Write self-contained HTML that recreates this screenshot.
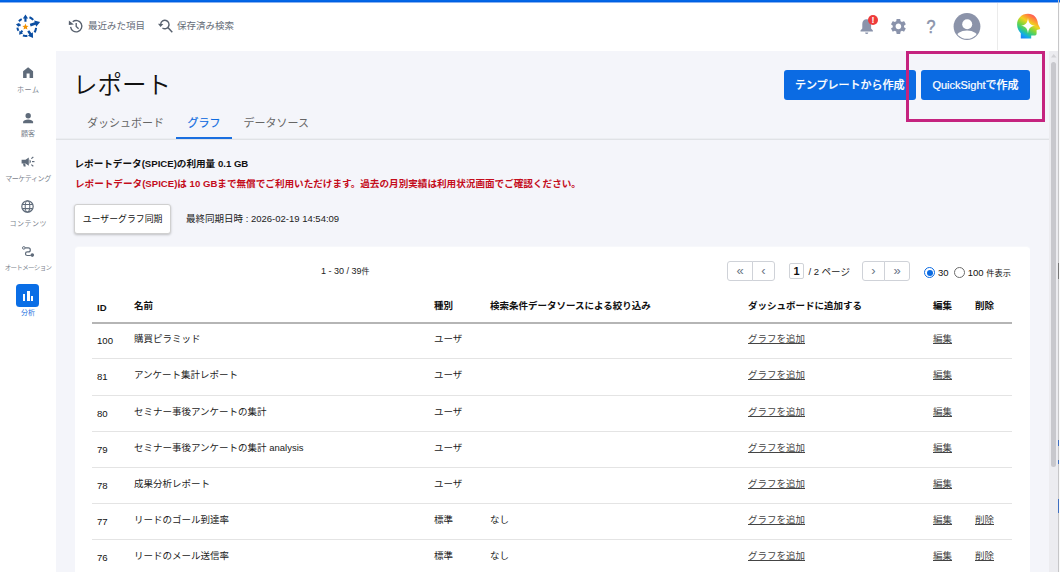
<!DOCTYPE html>
<html lang="ja">
<head>
<meta charset="utf-8">
<title>レポート</title>
<style>
*{box-sizing:border-box;margin:0;padding:0}
html,body{width:1060px;height:572px;overflow:hidden;background:#f4f5fa}
body{font-family:"Liberation Sans","Noto Sans CJK JP",sans-serif;color:#111;position:relative;font-size:10px}
.abs{position:absolute}
#header{position:absolute;left:0;top:0;width:1060px;height:51px;background:#fff}
#topbar{position:absolute;left:0;top:0;width:1060px;height:3px;background:#0060e3;border-top:1px solid #0366e6;border-bottom:1px solid #8ab2f0}
#side{position:absolute;left:0;top:51px;width:56px;height:521px;background:#fff}
.hitem{position:absolute;top:18px;font-size:9.5px;color:#666d78;white-space:nowrap;line-height:16px}
.nav{position:absolute;left:0;width:56px;text-align:center;font-size:7px;color:#7c838e;white-space:nowrap;line-height:10px}
.ico{position:absolute;overflow:visible}
#title{position:absolute;left:73px;top:66.5px;font-size:24.5px;line-height:38px;color:#111;font-weight:350;white-space:nowrap}
.tab{position:absolute;top:113.5px;font-size:11px;line-height:18px;color:#666;white-space:nowrap}
.tab.on{color:#0f6be0;-webkit-text-stroke:0.2px #0f6be0}
#tabline{position:absolute;left:56px;top:138px;width:993px;height:2px;background:#e6e8ec;border-bottom:1px solid #e0e2e6;border-top:1px solid #eceef2}
#tabul{position:absolute;left:175.5px;top:136.5px;width:56.5px;height:2px;background:#1a6fe0}
.btn{position:absolute;top:70px;height:30px;background:#0b6be3;color:#fff;font-size:11px;line-height:30.5px;text-align:center;border-radius:3px;white-space:nowrap;font-weight:500;-webkit-text-stroke:0.2px #fff}
#hl{position:absolute;left:906px;top:51px;width:139px;height:70.5px;border:3px solid #c5237f}
#l1{position:absolute;left:74.5px;top:157px;font-size:9.6px;line-height:14px;font-weight:700;color:#111;white-space:nowrap}
#l2{position:absolute;left:75px;top:177px;font-size:9.6px;line-height:14px;font-weight:700;color:#c40d1c;white-space:nowrap}
#sync{position:absolute;left:74.3px;top:204px;width:96.5px;height:30px;background:#fff;border:1px solid #d0d0d0;border-radius:3px;font-size:8.9px;line-height:29px;text-align:center;white-space:nowrap;box-shadow:0 1px 2.5px rgba(0,0,0,.22)}
#synct{position:absolute;left:186px;top:212px;font-size:9.5px;line-height:14px;white-space:nowrap;color:#222}
#card{position:absolute;left:75px;top:246px;width:955px;height:340px;background:#fff;border-radius:4px;border-top:1px solid #f7f8fb}
#cnt{position:absolute;left:321px;top:264px;font-size:9px;line-height:14px;color:#222;white-space:nowrap}
.pg{position:absolute;top:261px;height:20px;border:1px solid #cfd2d8;background:#fff;font-size:13px;line-height:17px;text-align:center;color:#6b7686}
table{position:absolute;left:92px;top:289px;width:920px;border-collapse:collapse;table-layout:fixed;font-size:9.5px}
th{text-align:left;font-weight:700;height:34px;border-bottom:2px solid #b5b5b5;padding:0 0 1px 4px;white-space:nowrap;color:#111}
td{height:36px;border-bottom:1px solid #e4e4e4;padding:0 0 5px 4px;white-space:nowrap;color:#222}
td u{color:#444}
th:first-child{padding:3px 0 0 5px}
td:first-child{font-size:9.6px;padding:0 0 0 5px;color:#111}
tr.h37 td{height:37px}
tr.h35 td{height:35px}
#sbtrack{position:absolute;left:1049px;top:51px;width:9px;height:521px;background:#ececf0}
#edge{position:absolute;left:1058px;top:0;width:1px;height:572px;background:#c6c6c8}
#edge2{position:absolute;left:1059px;top:3px;width:1px;height:569px;background:#fafafa}
.mk{position:absolute;left:1058px;width:1px;background:#3f6fc0}
#sbthumb{position:absolute;left:1050.5px;top:62px;width:5.5px;height:404.5px;background:#c8c8cd;border-radius:3px}
</style>
</head>
<body>
<div id="header">
  <svg class="ico" style="left:10px;top:11px" width="30" height="30" viewBox="-0.45 -0.7 30 30"><g fill="#0b4ea2"><polygon points="16.05,10.00 16.05,6.90 17.60,6.90 15.00,2.70 12.40,6.90 13.95,6.90 13.95,10.00"/><polygon points="20.17,14.74 25.12,13.13 25.72,14.99 29.65,10.24 23.68,8.71 24.28,10.56 19.34,12.17"/><polygon points="16.76,19.84 18.88,22.99 17.43,23.97 22.61,26.27 22.41,20.62 20.96,21.60 18.83,18.45"/><polygon points="11.13,18.32 10.03,19.74 9.00,18.94 8.72,23.04 12.63,21.77 11.60,20.97 12.71,19.56"/><polygon points="10.43,12.74 8.88,12.33 9.19,11.17 5.53,12.46 8.06,15.42 8.37,14.26 9.91,14.67"/><path d="M19.02 5.52 A10.30 10.30 0 0 1 22.77 8.24" fill="none" stroke="#0b4ea2" stroke-width="2"/><path d="M25.64 16.12 A10.70 10.70 0 0 1 24.07 20.67" fill="none" stroke="#0b4ea2" stroke-width="2"/><path d="M16.91 24.00 A9.20 9.20 0 0 1 12.46 23.84" fill="none" stroke="#0b4ea2" stroke-width="2"/><path d="M7.99 19.05 A8.10 8.10 0 0 1 6.94 15.85" fill="none" stroke="#0b4ea2" stroke-width="2"/><path d="M8.49 9.54 A8.50 8.50 0 0 1 11.27 7.36" fill="none" stroke="#0b4ea2" stroke-width="2"/></g><polygon fill="#f39200" points="15.00,11.90 15.88,13.99 18.14,14.18 16.43,15.66 16.94,17.87 15.00,16.70 13.06,17.87 13.57,15.66 11.86,14.18 14.12,13.99"/></svg>
  <svg class="ico" style="left:0;top:0" width="1060" height="51" viewBox="0 0 1060 51" fill="none" stroke="#58616e" stroke-width="1.35">
    <path d="M70.59 26.89 A5.65 5.65 0 1 0 72.72 21.75"/>
    <path d="M68.9 20.4 L68.8 24.9 L73.9 24.4 Z" fill="#58616e" stroke="none"/>
    <path d="M76.2 22.9 V26.4 L78.6 28.7"/>
    <path d="M162.45 27.98 A4.2 4.2 0 1 0 160.66 23.77"/>
    <path d="M167.9 27.6 L172.3 32.2" stroke-width="1.5"/>
    <path d="M158.0 23.7 L163.4 24.0 L160.5 27.0 Z" fill="#58616e" stroke="none"/>
  </svg>
  <div class="hitem" style="left:88px">最近みた項目</div>
  <div class="hitem" style="left:177px">保存済み検索</div>

  <!-- bell -->
  <svg class="ico" style="left:859px;top:18px" width="14" height="15.5" viewBox="-1.4 -1.2 28 31">
    <path d="M14 1.5 C8.6 1.5 5.2 5.6 5.2 11 V20 L1.6 23.6 V25.6 H26.4 V23.6 L22.8 20 V11 C22.8 5.6 19.4 1.5 14 1.5 Z" fill="#8a93ab"/>
    <path d="M10.8 27.6 H17.2 A3.2 3.2 0 0 1 10.8 27.6 Z" fill="#8a93ab"/>
  </svg>
  <div class="abs" style="left:868px;top:15px;width:10px;height:10px;border-radius:50%;background:#ee3b3b"></div>
  <div class="abs" style="left:868px;top:15px;width:10px;height:10px;color:#fff;font-size:9px;line-height:10px;text-align:center;font-weight:700">!</div>
  <!-- gear -->
  <svg class="ico" style="left:889.2px;top:17.1px" width="18.8" height="18.8" viewBox="0 0 24 24">
    <path fill="#8a93ab" d="M19.14 12.94c.04-.3.06-.61.06-.94 0-.32-.02-.64-.07-.94l2.03-1.58a.49.49 0 0 0 .12-.61l-1.92-3.32a.488.488 0 0 0-.59-.22l-2.39.96c-.5-.38-1.030-.7-1.620-.94l-.36-2.540a.484.484 0 0 0-.48-.41h-3.840c-.24 0-.43.17-.47.41l-.36 2.540c-.59.24-1.130.57-1.620.94l-2.390-.96c-.22-.08-.47 0-.59.22L2.740 8.870c-.12.210-.08.470.12.610l2.030 1.580c-.05.300-.09.630-.09.940s.02.640.07.940l-2.030 1.580a.49.49 0 0 0-.12.610l1.920 3.320c.12.220.37.290.59.220l2.390-.96c.5.380 1.030.700 1.620.940l.36 2.540c.05.240.24.410.48.410h3.840c.24 0 .44-.17.470-.41l.36-2.540c.59-.24 1.130-.56 1.620-.94l2.390.96c.22.080.47 0 .59-.22l1.920-3.320c.12-.22.070-.47-.12-.61l-2.010-1.580zM12 15.600c-1.980 0-3.600-1.620-3.600-3.600s1.620-3.600 3.600-3.600 3.600 1.620 3.600 3.600-1.620 3.600-3.600 3.600z"/>
  </svg>
  <div class="abs" style="left:921px;top:14.5px;width:20px;height:24px;color:#8a93ab;font-size:17.5px;line-height:24px;text-align:center;-webkit-text-stroke:0.5px #8a93ab;transform:scaleX(.92)">?</div>
  <!-- avatar -->
  <svg class="ico" style="left:953px;top:13px" width="27" height="27" viewBox="-0.5 0 27 27">
    <defs><clipPath id="avc"><circle cx="13.5" cy="13.5" r="12.3"/></clipPath></defs>
    <circle cx="13.5" cy="13.5" r="13.4" fill="#8b93a9"/>
    <circle cx="13.7" cy="11.2" r="5" fill="#fff"/>
    <ellipse cx="13.5" cy="25" rx="11.5" ry="7.6" fill="#fff" clip-path="url(#avc)"/>
  </svg>
  <div class="abs" style="left:997px;top:3px;width:1px;height:47px;background:#ebebeb"></div>
  <!-- AI head -->
  <svg class="ico" style="left:1016px;top:13px" width="25" height="26" viewBox="0 0 25 26">
    <defs>
      <linearGradient id="aig" x1="0.85" y1="0.05" x2="0.3" y2="1">
        <stop offset="0" stop-color="#ff3d6b"/><stop offset="0.2" stop-color="#ff8a3a"/><stop offset="0.38" stop-color="#f2d21f"/><stop offset="0.58" stop-color="#7fd63a"/><stop offset="0.75" stop-color="#2fc98a"/><stop offset="0.9" stop-color="#12a7f0"/><stop offset="1" stop-color="#1d86f5"/>
      </linearGradient>
    </defs>
    <path fill="url(#aig)" d="M12 0.8 C5.5 0.8 1.1 5.6 1.1 11.6 C1.1 15.4 2.8 18.4 4.8 20.2 V25.4 H15.2 V22.4 H19 C20.2 22.4 20.6 21.6 20.6 20.6 V17 L23.6 16.2 C24.2 16 24.2 15.4 24 15 L22 11 C21.6 4.6 17.6 0.8 12 0.8 Z"/>
    <path fill="#fff" d="M12 5 C12.6 10 14.2 12 19 12.8 C14.2 13.6 12.6 15.6 12 20.6 C11.4 15.6 9.8 13.6 5 12.8 C9.8 12 11.4 10 12 5 Z"/>
  </svg>
</div>
<div id="topbar"></div>
<div id="side">
  <svg class="ico" style="left:22.7px;top:16px" width="10.2" height="11" viewBox="0 0 20.4 22"><path fill="#5f6b7a" d="M10.2 0.4 L0.2 8.4 V21.8 H7.2 V13 H13.2 V21.8 H20.2 V8.4 Z"/></svg>
  <div class="nav" style="top:33.5px;letter-spacing:.5px;text-indent:.5px">ホーム</div>
  <svg class="ico" style="left:22.7px;top:61.5px" width="10.2" height="10.4" viewBox="0 0 20.4 20.8"><circle cx="10.4" cy="5.6" r="5.4" fill="#5f6b7a"/><path fill="#5f6b7a" d="M0.2 20.6 V17.6 C0.2 14.6 5.6 12.8 10.2 12.8 C14.8 12.8 20.2 14.6 20.2 17.6 V20.6 Z"/></svg>
  <div class="nav" style="top:78px">顧客</div>
  <svg class="ico" style="left:21px;top:105px" width="14" height="11" viewBox="0 0 28 22"><g fill="#5f6b7a"><path d="M1.2 7.4 H9 L15.6 3 V19.4 L9 15 H1.2 Z"/><path d="M4 15 H8.4 L9.4 21 H5.4 Z"/><path d="M17 7 A4.6 4.6 0 0 1 17 15.4 Z"/></g><g stroke="#5f6b7a" stroke-width="2.3"><path d="M20.6 5.2 L24.6 2"/><path d="M22 11.2 H27"/><path d="M20.6 17.2 L24.6 20.4"/></g></svg>
  <div class="nav" style="top:123px;letter-spacing:-.4px">マーケティング</div>
  <svg class="ico" style="left:21.3px;top:149px" width="13" height="13" viewBox="0 0 26 26" fill="none" stroke="#5f6b7a" stroke-width="2"><circle cx="13" cy="13" r="11.4" stroke-width="2.4"/><ellipse cx="13" cy="13" rx="4.6" ry="11.4" stroke-width="2.1"/><path d="M2.6 8.8 H23.4 M2.6 17.2 H23.4" stroke-width="2.1"/></svg>
  <div class="nav" style="top:168px;letter-spacing:.5px;text-indent:.5px">コンテンツ</div>
  <svg class="ico" style="left:21px;top:194px" width="13" height="11" viewBox="-1.2 -1.6 26 22" fill="none" stroke="#5f6b7a" stroke-width="2.4"><circle cx="4.4" cy="4.2" r="2.6" stroke-width="2"/><path d="M7 4.2 H13.4 A4 4 0 0 1 13.4 12.2 H11.4 A3.6 3.6 0 0 0 11.4 19.4 H18.4"/><circle cx="21.4" cy="18.6" r="3.6" fill="#5f6b7a" stroke="none"/></svg>
  <div class="nav" style="top:212px;font-size:6.5px;letter-spacing:-.65px">オートメーション</div>
  <div class="abs" style="left:16px;top:233px;width:23px;height:23px;border-radius:3.5px;background:#0a6ee6"></div>
  <div class="abs" style="left:23px;top:243px;width:2.4px;height:7.2px;background:#fff"></div>
  <div class="abs" style="left:26.6px;top:240px;width:3px;height:10.2px;background:#fff"></div>
  <div class="abs" style="left:30.6px;top:245px;width:2.6px;height:5.2px;background:#fff"></div>
  <div class="nav" style="top:257px;color:#1a6fe0">分析</div>
</div>
<div id="title">レポート</div>
<div class="tab" style="left:87px">ダッシュボード</div>
<div class="tab on" style="left:187.5px">グラフ</div>
<div class="tab" style="left:243.5px">データソース</div>
<div id="tabline"></div><div id="tabul"></div>
<div class="btn" style="left:784px;width:131.5px">テンプレートから作成</div>
<div class="btn" style="left:921px;width:109px">QuickSightで作成</div>
<div id="hl"></div>
<div id="l1">レポートデータ(SPICE)の利用量 0.1 GB</div>
<div id="l2">レポートデータ(SPICE)は 10 GBまで無償でご利用いただけます。過去の月別実績は利用状況画面でご確認ください。</div>
<div id="sync">ユーザーグラフ同期</div>
<div id="synct">最終同期日時 : 2026-02-19 14:54:09</div>
<div id="card"></div>
<div id="cnt">1 - 30 / 39<span style="font-size:8px">件</span></div>
<div class="pg" style="left:727px;width:26px;border-radius:3px 0 0 3px">«</div>
<div class="pg" style="left:752px;width:23px;border-radius:0 3px 3px 0">‹</div>
<div class="abs" style="left:789px;top:263px;width:15px;height:15.5px;border:1px solid #d0d3d8;border-radius:2px;background:#fff;font-size:11px;font-weight:700;line-height:14.5px;text-align:center;color:#111">1</div>
<div class="abs" style="left:808.4px;top:264.5px;font-size:9.5px;line-height:14px;white-space:nowrap;color:#222">/ 2 ページ</div>
<div class="pg" style="left:862px;width:23px;border-radius:3px 0 0 3px">›</div>
<div class="pg" style="left:884px;width:26px;border-radius:0 3px 3px 0">»</div>
<div class="abs" style="left:924px;top:267px;width:11px;height:11px;border-radius:50%;border:1.3px solid #0b6be3;background:#fff"></div>
<div class="abs" style="left:926.5px;top:269.5px;width:6px;height:6px;border-radius:50%;background:#0b6be3"></div>
<div class="abs" style="left:938px;top:265.5px;font-size:9.5px;line-height:14px;white-space:nowrap;color:#111">30</div>
<div class="abs" style="left:954.4px;top:267px;width:11px;height:11px;border-radius:50%;border:1px solid #6b6b6b;background:#fff"></div>
<div class="abs" style="left:967.8px;top:265.5px;font-size:9.5px;line-height:14px;white-space:nowrap;color:#111">100 <span style="font-size:8.2px">件表示</span></div>
<table>
<colgroup><col style="width:38px"><col style="width:300px"><col style="width:56px"><col style="width:258px"><col style="width:185px"><col style="width:42px"><col></colgroup>
<tr><th>ID</th><th>名前</th><th>種別</th><th>検索条件データソースによる絞り込み</th><th>ダッシュボードに追加する</th><th>編集</th><th>削除</th></tr>
<tr class="h35"><td>100</td><td>購買ピラミッド</td><td>ユーザ</td><td></td><td><u>グラフを追加</u></td><td><u>編集</u></td><td></td></tr>
<tr class="h37"><td>81</td><td>アンケート集計レポート</td><td>ユーザ</td><td></td><td><u>グラフを追加</u></td><td><u>編集</u></td><td></td></tr>
<tr><td>80</td><td>セミナー事後アンケートの集計</td><td>ユーザ</td><td></td><td><u>グラフを追加</u></td><td><u>編集</u></td><td></td></tr>
<tr><td>79</td><td>セミナー事後アンケートの集計 analysis</td><td>ユーザ</td><td></td><td><u>グラフを追加</u></td><td><u>編集</u></td><td></td></tr>
<tr><td>78</td><td>成果分析レポート</td><td>ユーザ</td><td></td><td><u>グラフを追加</u></td><td><u>編集</u></td><td></td></tr>
<tr><td>77</td><td>リードのゴール到達率</td><td>標準</td><td>なし</td><td><u>グラフを追加</u></td><td><u>編集</u></td><td><u>削除</u></td></tr>
<tr><td>76</td><td>リードのメール送信率</td><td>標準</td><td>なし</td><td><u>グラフを追加</u></td><td><u>編集</u></td><td><u>削除</u></td></tr>
</table>
<div id="sbtrack"></div><div id="sbthumb"></div>
<svg class="ico" style="left:1050.5px;top:54px" width="5.5" height="3.4" viewBox="0 0 11 6.8"><path d="M5.5 0 L11 6.8 H0 Z" fill="#d2d2d6"/></svg>
<div id="edge"></div><div id="edge2"></div>
<div class="mk" style="top:440px;height:6px"></div><div class="mk" style="top:460px;height:4px"></div><div class="mk" style="top:499px;height:14px"></div><div class="mk" style="top:263px;height:16px;background:#777"></div>
</body>
</html>
